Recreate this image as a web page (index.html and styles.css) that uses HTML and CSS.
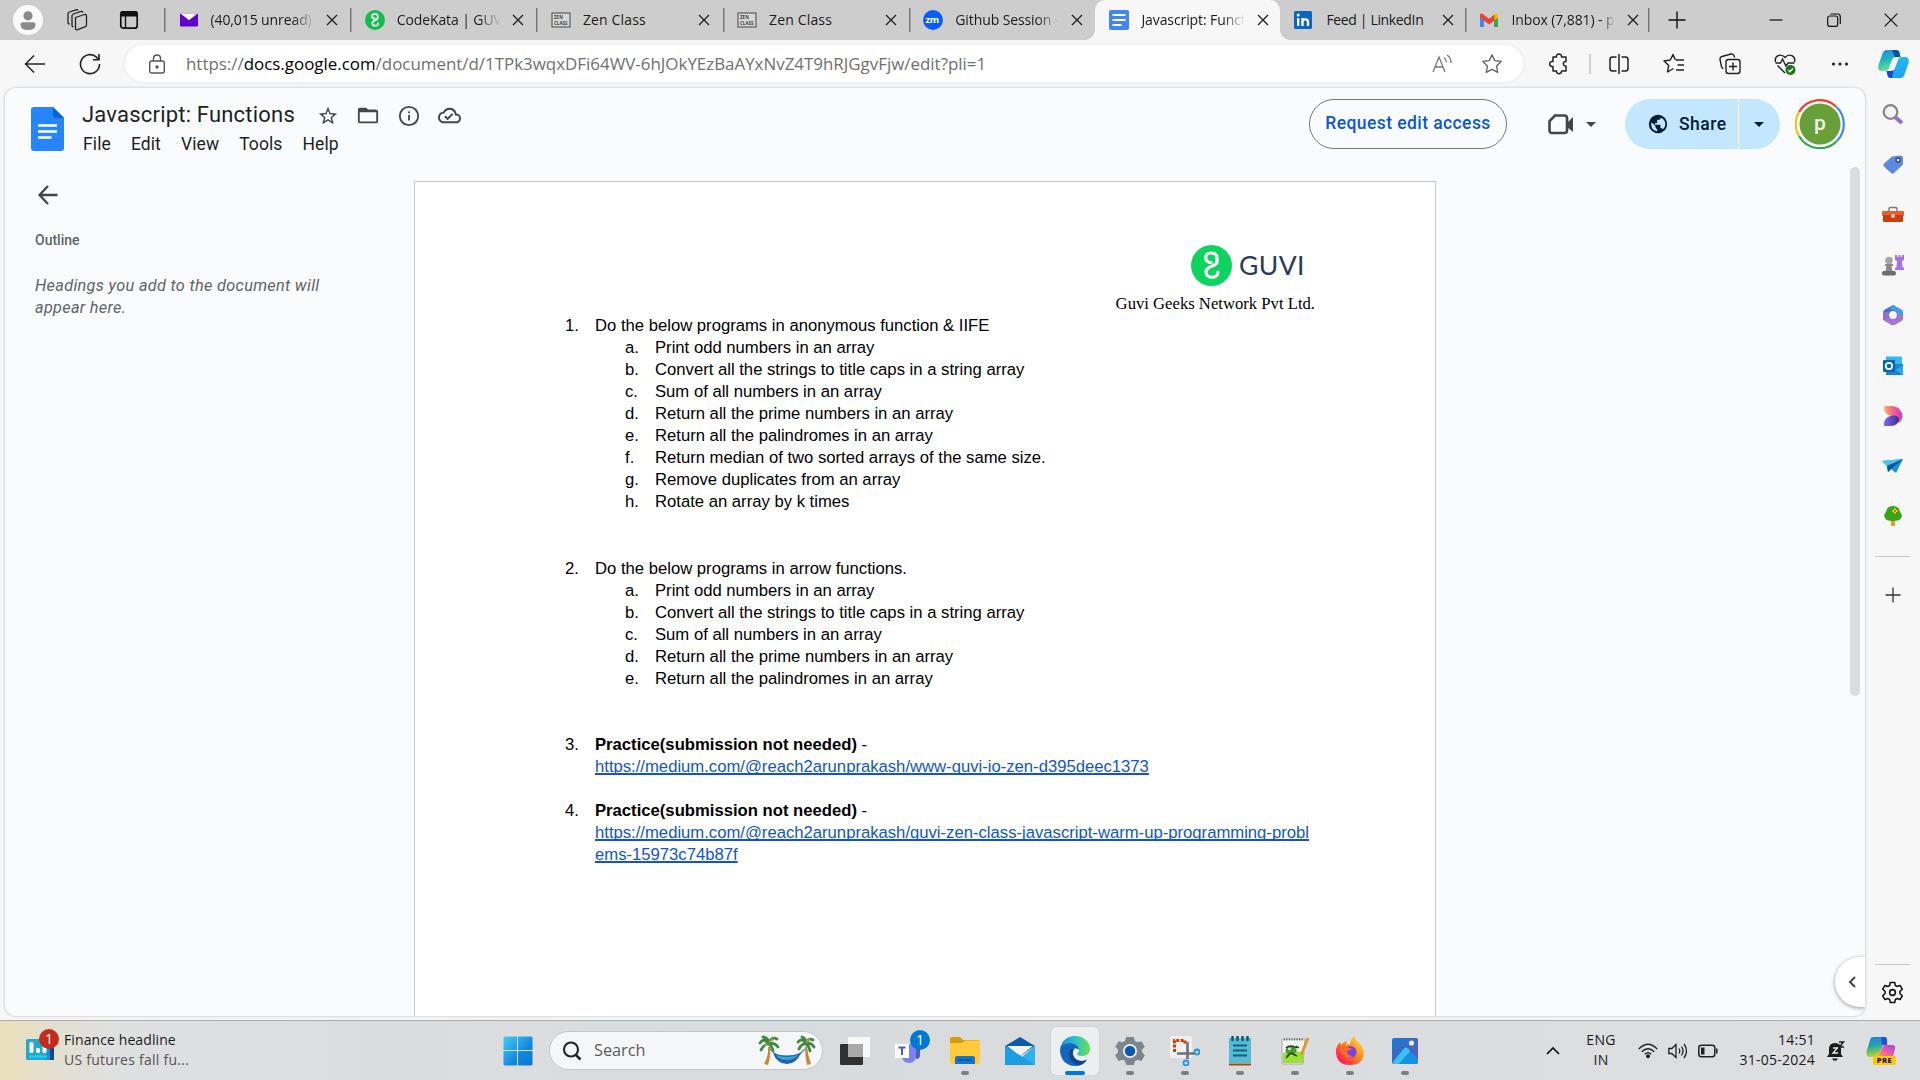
FILE: index.html
```html
<!DOCTYPE html>
<html lang="en">
<head>
<meta charset="utf-8">
<title>Javascript: Functions</title>
<link rel="stylesheet" href="styles.css">
</head>
<body>
<div class="screen">
  <header class="tabstrip">
    <div class="strip-tools">
      <span class="profile"><svg width="30" height="30" viewBox="0 0 30 30"><circle cx="15" cy="15" r="15" fill="#fafafa"/><circle cx="15" cy="10.8" r="4.6" fill="#8a8a8a"/><path d="M7.5 19.5q0-2.2 2.2-2.2h10.6q2.2 0 2.2 2.2 0 5.5-7.5 5.500-7.500 0-7.500-5.500z" fill="#8a8a8a"/></svg></span>
      <span class="tool"><svg width="24" height="24" viewBox="0 0 24 24" fill="none" stroke="#222" stroke-width="1.3"><path d="M10.500 9.500l9-3q2-.500 2 1.500v9q0 1.300-1.200 1.700l-7.500 3q-2.300.800-2.300-1.500z"/><path d="M8.500 18.500q-1.500.500-1.500-1.300V8q0-1.500 1.400-2l7.600-2.500q1.500-.300 2 1"/><path d="M4.800 15.800q-1.800.500-1.800-1.300V6q0-1.500 1.400-2L11 1.800q1.500-.400 2 .700"/></svg></span>
      <span class="tool"><svg width="20" height="20" viewBox="0 0 20 20"><rect x="1.800" y="1.800" width="16.400" height="16.400" rx="2.500" fill="none" stroke="#111" stroke-width="1.700"/><path d="M1 6.500V4q0-3 3-3h12q3 0 3 3v2.500z" fill="#111"/><path d="M6.500 6v12" stroke="#111" stroke-width="1.400"/></svg></span>
    </div>
    <nav class="tabs">
      <div class="tab"><svg class="fav" viewBox="0 0 20 20"><rect x="1" y="3.500" width="18" height="13" rx="1" fill="#6001d2"/><path d="M1.500 3.500h17L10 10.200z" fill="#fff"/></svg><span class="tab-title fade">(40,015 unread) -</span><svg class="x" viewBox="0 0 12 12"><path d="M1 1l10 10M11 1L1 11"/></svg></div>
      <div class="tab"><svg class="fav" viewBox="0 0 41 41"><circle cx="20.500" cy="20.500" r="20.500" fill="#0fbf4c"/><path d="M20 17.500c-7 0-7-9.500 0-9.500 4 0 6 2 6 5v4c0 5-11 3-11 10 0 7 12 7 12 0" fill="none" stroke="#fff" stroke-width="3.600" stroke-linecap="round"/></svg><span class="tab-title fade">CodeKata | GUVI</span><svg class="x" viewBox="0 0 12 12"><path d="M1 1l10 10M11 1L1 11"/></svg></div>
      <div class="tab"><svg class="fav" viewBox="0 0 20 20"><rect x="1" y="3" width="18" height="14" fill="#d7d7d7" stroke="#666" stroke-width="1.300"/><text x="3" y="9" class="zen">ZEN</text><text x="3" y="14.500" class="zen">CLASS</text></svg><span class="tab-title wide">Zen Class</span><svg class="x" viewBox="0 0 12 12"><path d="M1 1l10 10M11 1L1 11"/></svg></div>
      <div class="tab"><svg class="fav" viewBox="0 0 20 20"><rect x="1" y="3" width="18" height="14" fill="#d7d7d7" stroke="#666" stroke-width="1.300"/><text x="3" y="9" class="zen">ZEN</text><text x="3" y="14.500" class="zen">CLASS</text></svg><span class="tab-title wide">Zen Class</span><svg class="x" viewBox="0 0 12 12"><path d="M1 1l10 10M11 1L1 11"/></svg></div>
      <div class="tab"><svg class="fav" viewBox="0 0 20 20"><circle cx="10" cy="10" r="10" fill="#0b5cff"/><text x="2.500" y="13" class="zm">zm</text></svg><span class="tab-title fade">Github Session -</span><svg class="x" viewBox="0 0 12 12"><path d="M1 1l10 10M11 1L1 11"/></svg></div>
      <div class="tab active"><svg class="fav" viewBox="0 0 20 20"><rect width="20" height="20" rx="2" fill="#4285f4"/><path d="M3.500 5h13M3.500 10h13M3.500 15h9" stroke="#fff" stroke-width="2.200"/></svg><span class="tab-title fade">Javascript: Functions</span><svg class="x" viewBox="0 0 12 12"><path d="M1 1l10 10M11 1L1 11"/></svg></div>
      <div class="tab"><svg class="fav" viewBox="0 0 20 20"><rect x="0" y="1" width="18" height="18" rx="1.500" fill="#0a66c2"/><path d="M4.200 8v8M8.500 8v8M8.500 12c0-3.500 5.500-3.500 5.500 0v4" fill="none" stroke="#fff" stroke-width="2.300"/><circle cx="4.200" cy="5" r="1.500" fill="#fff"/></svg><span class="tab-title snug">Feed | LinkedIn</span><svg class="x" viewBox="0 0 12 12"><path d="M1 1l10 10M11 1L1 11"/></svg></div>
      <div class="tab"><svg class="fav" viewBox="0 0 20 20"><path d="M1 5v12h4V8z" fill="#4285f4"/><path d="M15 8v9h4V5z" fill="#34a853"/><path d="M15 4.500l2-1.200q2 0 2 2.200v2l-4 3z" fill="#fbbc04"/><path d="M1 7.500V5q0-2 2-1.500l7 5.200 5.500-4.200v6L10 14.500z" fill="#ea4335"/></svg><span class="tab-title fade late">Inbox (7,881) - p</span><svg class="x" viewBox="0 0 12 12"><path d="M1 1l10 10M11 1L1 11"/></svg></div>
    </nav>
    <span class="new-tab"><svg width="18" height="18" viewBox="0 0 18 18"><path d="M9 .500v17M.500 9h17" stroke="#111" stroke-width="1.400"/></svg></span>
    <div class="window-buttons">
      <span><svg width="14" height="14" viewBox="0 0 14 14"><path d="M.500 7h13" stroke="#111" stroke-width="1.200"/></svg></span>
      <span><svg width="14" height="14" viewBox="0 0 14 14" fill="none" stroke="#111" stroke-width="1.200"><rect x=".700" y="3" width="10" height="10.300" rx="2"/><path d="M3.500 1h7q2.800 0 2.800 2.800V11"/></svg></span>
      <span><svg width="14" height="14" viewBox="0 0 14 14"><path d="M.700.700l12.600 12.600M13.300.700L.700 13.300" stroke="#111" stroke-width="1.200"/></svg></span>
    </div>
  </header>

  <div class="toolbar">
    <span class="tb back"><svg width="22" height="20" viewBox="0 0 22 20" fill="none" stroke="#222" stroke-width="1.500"><path d="M21 10H1.500M10 1.500L1.500 10l8.500 8.500"/></svg></span>
    <span class="tb reload"><svg width="22" height="22" viewBox="0 0 22 22" fill="none" stroke="#222" stroke-width="1.600"><path d="M20.500 11A9.500 9.500 0 1 1 17.500 4.200l2.200 2.300M20 1v5.700h-6"/></svg></span>
    <div class="omnibox">
      <svg class="lock" width="18" height="20" viewBox="0 0 18 20" fill="none" stroke="#555" stroke-width="1.400"><rect x="1.700" y="7" width="14.600" height="12" rx="2"/><path d="M5.500 7V4.500q0-3.500 3.500-3.500t3.500 3.500V7"/><circle cx="9" cy="13" r="1" fill="#555"/></svg>
      <span class="url">https://<b>docs.google.com</b>/document/d/1TPk3wqxDFi64WV-6hJOkYEzBaAYxNvZ4T9hRJGgvFjw/edit?pli=1</span>
      <span class="omni-icon"><svg width="20" height="20" viewBox="0 0 20 20" fill="none" stroke="#777" stroke-width="1.300"><path d="M1 18L7 3l6 15M3.200 13h7.600M12 3.500q2.500 2 2.500 5M15.200 1q4 3 3.800 8"/></svg></span>
      <span class="omni-icon"><svg width="22" height="22" viewBox="0 0 24 24" fill="none" stroke="#666" stroke-width="1.500" stroke-linejoin="round"><path d="M12 2l3.100 6.300 6.900 1-5 4.900 1.200 6.900L12 17.800l-6.200 3.300L7 14.200 2 9.300l6.900-1z"/></svg></span>
    </div>
    <div class="actions">
      <span><svg width="22" height="22" viewBox="0 0 22 22" fill="none" stroke="#222" stroke-width="1.500" stroke-linejoin="round"><path d="M5 4h3.500c-.800-4 5.800-4 5 0H18v4.500c-3.500-.500-3.500 5 0 4.500V18h-4.500c.500 3.500-5.500 3.500-5 0H5v-4.500c-4.500.800-4.500-6 0-5z"/></svg></span>
      <i class="bar"></i>
      <span><svg width="20" height="20" viewBox="0 0 20 20" fill="none" stroke="#222" stroke-width="1.500"><path d="M7.500 3H3.500q-2.500 0-2.500 2.500v9Q1 17 3.500 17h4M12.500 3h4q2.500 0 2.500 2.500v9q0 2.500-2.500 2.500h-4M10 0v20"/></svg></span>
      <span><svg width="22" height="22" viewBox="0 0 22 22" fill="none" stroke="#222" stroke-width="1.400" stroke-linejoin="round"><path d="M13 7h8M14.500 12H21M13 17h8M10.500 15.500L4.500 19l1.200-6.500L1 8l6.300-1L10 1.500 12.500 7"/></svg></span>
      <span><svg width="22" height="22" viewBox="0 0 22 22" fill="none" stroke="#222" stroke-width="1.400"><rect x="7" y="6.500" width="14" height="14" rx="2.500"/><path d="M14 9.500v8M10 13.500h8M4.500 15.500q-1.500-.300-2-1.800L1 6.500Q.700 4 3 3.500L12 1q2-.300 3 1.500l.600 2"/></svg></span>
      <span><svg width="22" height="22" viewBox="0 0 22 22" fill="none" stroke="#222" stroke-width="1.400"><path d="M1.500 9C0 2.500 7 0 11 4.500 15 0 22 2.500 20.500 9M1.500 10h5l2-4 3.500 7 2-3h6.500M3.500 12.500L11 20"/><circle cx="16.500" cy="17" r="5" fill="#107c10" stroke="none"/><path d="M14.200 17l1.700 1.700 3-3.200" stroke="#fff"/></svg></span>
      <span><svg width="18" height="4" viewBox="0 0 18 4" fill="#222"><circle cx="2.500" cy="2" r="1.600"/><circle cx="9" cy="2" r="1.600"/><circle cx="15.500" cy="2" r="1.600"/></svg></span>
    </div>
    <span class="copilot"><svg width="31" height="28" viewBox="0 0 31 28"><defs><linearGradient id="cpa" x2=".3" y2="1"><stop stop-color="#1a8be0"/><stop offset=".5" stop-color="#1fb4c4"/><stop offset="1" stop-color="#6fe08c"/></linearGradient><linearGradient id="cpb" x2="0" y2="1"><stop stop-color="#2bb6ee"/><stop offset="1" stop-color="#1aa2f5"/></linearGradient></defs><path d="M9 0h9q3 0 3.500 3l1 4H18q-3 0-4 3l-3 8q-1 3-4 3H4q-5 0-3.500-6L4.500 3.500Q5.500 0 9 0z" fill="url(#cpa)"/><path d="M14 0h4q3 0 3.500 3l1 4h-6z" fill="#0c4fb0"/><path d="M22 28h-9q-3 0-3.500-3l-1-4H13q3 0 4-3l3-8q1-3 4-3h3q5 0 3.500 6l-4 11.500Q25.500 28 22 28z" fill="url(#cpb)"/><path d="M8.500 21H13q1.500 0 2.500-1l-1.500 8h-1q-3 0-3.500-3z" fill="#1747cc"/></svg></span>
  </div>

  <div class="body">
    <main class="page-frame">
      <div class="docs-bar">
        <svg class="docs-logo" width="33" height="44" viewBox="0 0 33 44"><path d="M3 0h19l11 11v30q0 3-3 3H3q-3 0-3-3V3q0-3 3-3z" fill="#2684fc"/><path d="M22 0l11 11H24q-2 0-2-2z" fill="#0066da"/><path d="M7 18.500h19M7 24.500h19M7 30.500h13.500" stroke="#fff" stroke-width="2.600"/></svg>
        <div class="doc-head">
          <div class="title-row">
            <h1>Javascript: Functions</h1>
            <span><svg width="22" height="22" viewBox="0 0 24 24" fill="#444746"><path d="M22 9.240l-7.190-.620L12 2 9.190 8.630 2 9.240l5.460 4.730L5.820 21 12 17.270 18.180 21l-1.630-7.030L22 9.240zM12 15.400l-3.760 2.270 1-4.280-3.320-2.880 4.380-.380L12 6.100l1.710 4.040 4.380.380-3.320 2.880 1 4.280L12 15.400z"/></svg></span>
            <span><svg width="22" height="22" viewBox="0 0 24 24" fill="#444746"><path d="M20 5h-8l-2-2H3q-2 0-2 2v13q0 2 2 2h18q2 0 2-2V7q0-2-3-2zm1 13H3V8h18z"/></svg></span>
            <span><svg width="22" height="22" viewBox="0 0 24 24" fill="#444746"><path d="M11 7h2v2h-2zm0 4h2v6h-2zm1-10a11 11 0 1 0 0 22 11 11 0 0 0 0-22zm0 20a9 9 0 1 1 0-18 9 9 0 0 1 0 18z"/></svg></span>
            <span><svg width="23" height="23" viewBox="0 0 24 24" fill="#444746"><path d="M19.350 10.040A7.490 7.490 0 0 0 12 4C9.110 4 6.600 5.640 5.350 8.040A5.994 5.994 0 0 0 0 14c0 3.310 2.690 6 6 6h13c2.760 0 5-2.240 5-5 0-2.640-2.050-4.780-4.650-4.960zM19 18H6c-2.210 0-4-1.790-4-4 0-2.050 1.530-3.760 3.560-3.970l1.070-.110.500-.950A5.469 5.469 0 0 1 12 6c2.620 0 4.880 1.860 5.390 4.430l.300 1.500 1.530.110A2.980 2.980 0 0 1 22 15c0 1.650-1.350 3-3 3zm-9-3.820l-2.090-2.090L6.500 13.500 10 17l6.010-6.010-1.410-1.410z"/></svg></span>
          </div>
          <div class="menu"><span>File</span><span>Edit</span><span>View</span><span>Tools</span><span>Help</span></div>
        </div>
        <button class="request">Request edit access</button>
        <div class="meet"><svg width="26" height="21" viewBox="0 0 26 21"><path d="M7 1.500h9.500q2.500 0 2.500 2.500v12.500q0 2.500-2.500 2.500H4q-2.500 0-2.500-2.500V7z" fill="none" stroke="#444746" stroke-width="2.600"/><path d="M19 9l6-6v15l-6-5z" fill="#444746"/></svg><svg width="10" height="5" viewBox="0 0 10 5"><path d="M0 0h10L5 5z" fill="#444746"/></svg></div>
        <div class="share"><span class="share-main"><svg width="20" height="20" viewBox="0 0 24 24" fill="#001d35"><path d="M12 1a11 11 0 1 0 0 22 11 11 0 0 0 0-22zm-1 19.930A8 8 0 0 1 4.300 10L9 14.700v1c0 1.100.900 2.200 2 2.200zm6.900-2.540c-.260-.810-1-1.390-1.900-1.390h-1v-3c0-.550-.450-1-1-1H8v-2h2c.550 0 1-.450 1-1V7h2c1.100 0 2-.900 2-2v-.400a8 8 0 0 1 2.900 13.790z"/></svg>Share</span><span class="share-more"><svg width="10" height="5" viewBox="0 0 10 5"><path d="M0 0h10L5 5z" fill="#001d35"/></svg></span></div>
        <svg class="avatar" width="50" height="50" viewBox="0 0 50 50"><g fill="none" stroke-width="2.200"><path d="M4 13A24 24 0 0 1 41 7.500" stroke="#ea4335"/><path d="M41 7.500A24 24 0 0 1 42 42" stroke="#4285f4"/><path d="M42 42A24 24 0 0 1 4 37" stroke="#34a853"/><path d="M4 37A24 24 0 0 1 4 13" stroke="#fbbc04"/></g><circle cx="25" cy="25" r="20.500" fill="#689f38"/><text x="25" y="30.500" text-anchor="middle" class="avatar-letter">p</text></svg>
      </div>

      <div class="workspace">
        <aside class="outline">
          <svg width="22" height="20" viewBox="0 0 22 20" fill="none" stroke="#444746" stroke-width="2.300"><path d="M20.500 10H2.500M11 1L2.500 10l8.500 9"/></svg>
          <h2>Outline</h2>
          <p>Headings you add to the document will appear here.</p>
        </aside>
        <article class="sheet">
          <div class="letterhead">
            <div class="brand"><svg width="41" height="41" viewBox="0 0 41 41"><circle cx="20.500" cy="20.500" r="20.500" fill="#0bd45f"/><path d="M20 17.500c-7 0-7-9.500 0-9.500 4 0 6 2 6 5v4c0 5-11 3-11 10 0 7 12 7 12 0" fill="none" stroke="#fff" stroke-width="3.200" stroke-linecap="round"/></svg><span>GUVI</span></div>
            <p>Guvi Geeks Network Pvt Ltd.</p>
          </div>
          <div class="doc-text">
            <div class="item"><span>1.</span><p>Do the below programs in anonymous function &amp; IIFE</p></div>
            <div class="item sub"><span>a.</span><p>Print odd numbers in an array</p></div>
            <div class="item sub"><span>b.</span><p>Convert all the strings to title caps in a string array</p></div>
            <div class="item sub"><span>c.</span><p>Sum of all numbers in an array</p></div>
            <div class="item sub"><span>d.</span><p>Return all the prime numbers in an array</p></div>
            <div class="item sub"><span>e.</span><p>Return all the palindromes in an array</p></div>
            <div class="item sub"><span>f.</span><p>Return median of two sorted arrays of the same size.</p></div>
            <div class="item sub"><span>g.</span><p>Remove duplicates from an array</p></div>
            <div class="item sub"><span>h.</span><p>Rotate an array by k times</p></div>
            <div class="item second"><span>2.</span><p>Do the below programs in arrow functions.</p></div>
            <div class="item sub"><span>a.</span><p>Print odd numbers in an array</p></div>
            <div class="item sub"><span>b.</span><p>Convert all the strings to title caps in a string array</p></div>
            <div class="item sub"><span>c.</span><p>Sum of all numbers in an array</p></div>
            <div class="item sub"><span>d.</span><p>Return all the prime numbers in an array</p></div>
            <div class="item sub"><span>e.</span><p>Return all the palindromes in an array</p></div>
            <div class="item spaced"><span>3.</span><p><b>Practice(submission not needed)</b> -<br><a>https://medium.com/@reach2arunprakash/www-guvi-io-zen-d395deec1373</a></p></div>
            <div class="item spaced-one"><span>4.</span><p><b>Practice(submission not needed)</b> -<br><a>https://medium.com/@reach2arunprakash/guvi-zen-class-javascript-warm-up-programming-probl<br>ems-15973c74b87f</a></p></div>
          </div>
        </article>
        <i class="scroll-thumb"></i>
      </div>
      <span class="panel-toggle"><svg width="8" height="12" viewBox="0 0 8 12"><path d="M7 1L2 6l5 5" fill="none" stroke="#444746" stroke-width="2"/></svg></span>
    </main>

    <aside class="sidebar">
      <span><svg width="22" height="22" viewBox="0 0 22 22"><path d="M13 13l7 6" stroke="#9b6ad8" stroke-width="4"/><circle cx="8.500" cy="8" r="6.800" fill="#f2f2f2" stroke="#858585" stroke-width="2.200"/></svg></span>
      <span><svg width="22" height="22" viewBox="0 0 22 22"><path d="M10 2.500l8-1q3 0 3 3v6L12 19q-1.500 1.500-3 0L2 12.500q-1.500-1.500 0-3z" fill="#5c8ae0"/><circle cx="16" cy="6" r="2" fill="#fff" stroke="#24498f" stroke-width="1.300"/></svg></span>
      <span><svg width="22" height="22" viewBox="0 0 22 22"><path d="M7 7V5q0-1.500 1.500-1.500h5Q15 3.500 15 5v2" fill="none" stroke="#777" stroke-width="1.400"/><rect x="0" y="7" width="22" height="5" rx="1" fill="#e8602c"/><path d="M1 11h20v6q0 1-1 1H2q-1 0-1-1z" fill="#c8400f"/><circle cx="11" cy="12" r="2" fill="#ccc"/></svg></span>
      <span><svg width="22" height="22" viewBox="0 0 22 22"><path d="M13 1h2v2h1.500V1h2v2H20V1h2v5l-2 1 .500 6 1.500 1v2h-9v-2l1.500-1 .500-6-2-1z" fill="#a873dd"/><circle cx="7" cy="6.500" r="3.800" fill="#a6a6a6"/><path d="M3 10h8v2H9.500l1 5.500h-7l1-5.500H3z" fill="#8a8a8a"/><rect y="17" width="14" height="4.500" rx="2" fill="#6e6e6e"/></svg></span>
      <span><svg width="22" height="22" viewBox="0 0 22 22"><path d="M11 1l8 4.500q2 1 2 3V14q0 2-2 3l-6 3.500q-2 1-4 0L3 17q-2-1-2-3V8.500q0-2 2-3z" fill="#4f6fcb"/><path d="M11 1l8 4.500q2 1 2 3V13l-6-3V7.500L8 5z" fill="#3aa3e8"/><path d="M1 8l6 0v6l-5 2.500Q1 15.500 1 14z" fill="#8f6fd0"/><path d="M21 12v2q0 2-2 3l-6 3.500q-2 1-4 0L1.500 16l5-2.500 5 2 4-3V9z" fill="#a875d2"/><circle cx="11" cy="11" r="3.900" fill="#f7f7f7"/></svg></span>
      <span><svg width="22" height="22" viewBox="0 0 22 22"><rect x="4" y="1.500" width="16" height="12" fill="#35b8f1"/><rect x="4" y="9" width="17" height="11" fill="#1484d6"/><path d="M13 15l8-5v10z" fill="#28a8ea"/><rect x="1" y="5" width="12" height="12" rx="1" fill="#0364b8"/><circle cx="7" cy="11" r="3.200" fill="none" stroke="#fff" stroke-width="1.800"/></svg></span>
      <span><svg width="22" height="22" viewBox="0 0 22 22"><defs><linearGradient id="dsa"><stop stop-color="#ffb067"/><stop offset=".6" stop-color="#f0568d"/><stop offset="1" stop-color="#c436e8"/></linearGradient><linearGradient id="dsb"><stop stop-color="#7b6df5"/><stop offset="1" stop-color="#3f2b8c"/></linearGradient></defs><path d="M2 1h8q10 1 10.500 11-1 4-4 6 0-7-7-7Q2 10 2 1z" fill="url(#dsa)"/><path d="M2 21v-3q1-7 9-7.500 6 0 6 4Q16 21 9 21z" fill="url(#dsb)"/></svg></span>
      <span><svg width="22" height="22" viewBox="0 0 22 22"><path d="M0 6l21-2-7 14-5-4-3 3-1-6z" fill="#1793dc"/><path d="M0 6l21-2L5 11z" fill="#4cc2f5"/><path d="M5 11l16-7-12 10-3 3z" fill="#0b5590"/></svg></span>
      <span><svg width="22" height="22" viewBox="0 0 22 22"><path d="M9 15h4v6H9z" fill="#e9a118"/><path d="M11 1q6 0 7 6 3 3 1 6-1 3-8 3t-8-3q-2-3 1-6 1-6 7-6z" fill="#3aa418"/><path d="M13 3.500v5M10.500 6h5" stroke="#ffd21a" stroke-width="2.200"/><circle cx="13" cy="6" r="1" fill="#d33"/></svg></span>
      <i class="rule"></i>
      <span class="add"><svg width="16" height="16" viewBox="0 0 16 16"><path d="M8 .500v15M.500 8h15" stroke="#333" stroke-width="1.300"/></svg></span>
      <i class="rule low"></i>
      <span class="settings"><svg width="23" height="23" viewBox="0 0 24 24" fill="none" stroke="#111" stroke-width="1.600" stroke-linejoin="round"><path d="M9.700 1.500h4.600l.700 3.200 1.700 1 3.200-1.100 2.300 4-2.500 2.300v2.200l2.500 2.300-2.300 4-3.200-1.100-1.700 1-.700 3.200H9.700L9 19.300l-1.700-1-3.200 1.100-2.300-4 2.500-2.300v-2.200L1.800 8.600l2.300-4 3.200 1.100 1.700-1z"/><circle cx="12" cy="12" r="3"/></svg></span>
    </aside>
  </div>

  <footer class="taskbar">
    <div class="widget">
      <div class="widget-icon"><svg width="28" height="21" viewBox="0 0 28 21"><rect width="28" height="21" rx="2.500" fill="#1f8fce"/><rect width="20" height="21" rx="2.500" fill="#28a6cf"/><rect x="24" y="4" width="4" height="17" fill="#0b4a8a"/><rect x="3.500" y="3" width="4" height="11" rx="1.500" fill="#fff"/><rect x="10" y="9" width="4" height="5" rx="1.500" fill="#fff"/><rect x="16.500" y="7" width="4" height="7" rx="1.500" fill="#fff"/><path d="M3 17.500h18" stroke="#18d6f5" stroke-width="2"/></svg><b class="badge red">1</b></div>
      <div class="widget-text"><span>Finance headline</span><small>US futures fall fu...</small></div>
    </div>
    <span class="slot start"><svg width="30" height="30" viewBox="0 0 30 30"><defs><linearGradient id="win" x2="1" y2="1"><stop stop-color="#45cdfb"/><stop offset=".6" stop-color="#1189e0"/><stop offset="1" stop-color="#0b74d1"/></linearGradient></defs><path d="M1.500.500H14V14H.500V1.500zM15 .500h13.500l1 1V14H15zM.500 15H14v14.500H1.500l-1-1zM15 15h14.500v13.500l-1 1H15z" fill="url(#win)"/></svg></span>
    <div class="search">
      <svg width="20" height="20" viewBox="0 0 20 20" fill="none" stroke="#222"><circle cx="9" cy="8.500" r="7" stroke-width="2.100"/><path d="M13.800 13.800L18.500 18.500" stroke-width="2.600"/></svg>
      <span>Search</span>
      <svg width="58" height="32" viewBox="0 0 58 32"><path d="M10 12q1 8-4 17l4 1q3-9 2-18zM49 12q1 9 4 17l-4 1q-2-9-2-18z" fill="#c9882f"/><g fill="none" stroke="#3f8a43" stroke-width="2.800" stroke-linecap="round"><path d="M11 9Q6 2 2 8M11 9Q7 8 3 15M11 9Q11 3 5 2M11 9Q13 1 19 4M11 9q5-2 9 3M11 9q3 2 4 7M48 9q-4-7-8-2M48 9q-4-1-7 5M48 9q0-6-4-7M48 9q2-7 7-4M48 9q5-2 8 3M48 9q3 2 4 7"/></g><path d="M11 7l5-3M48 7l4-3M9 9l-3 1" stroke="#b8a13d" stroke-width="1.600"/><path d="M12 14l6 6M47 14l-6 6M12 14q6 8 17 8t18-8" fill="none" stroke="#5a8ccc" stroke-width="1.200"/><path d="M15 18q14 5 28 0-5 11-14 11-10 0-14-11z" fill="#2363b5"/><path d="M18 20q11 4 22 0-4 5-11 5-8 0-11-5z" fill="#39a5cf"/></svg>
    </div>
    <div class="apps">
      <span class="slot"><svg width="30" height="28" viewBox="0 0 30 28"><rect y="7" width="23" height="21" rx="1" fill="#30302f"/><rect x="8" width="22" height="20" rx="1" fill="#fff" opacity=".8"/><path d="M8 7h15v13H8z" fill="#aaa"/></svg></span>
      <span class="slot teams"><svg width="34" height="30" viewBox="0 0 34 30"><path d="M19 7h8v12q0 4-4 4z" fill="#5059c9"/><path d="M10 8h13v11q0 8-7 8t-7-8z" fill="#7b83eb"/><rect x="2" y="8" width="14" height="14" fill="#fff"/><path d="M5.500 11.500h7M9 11.500V19" stroke="#5059c9" stroke-width="2"/></svg><b class="badge blue">1</b></span>
      <span class="slot run"><svg width="30" height="27" viewBox="0 0 30 27"><path d="M0 2q0-2 2-2h8l3 3h15q2 0 2 2v5H0z" fill="#d99a0b"/><path d="M0 6h12l3-2.500h15V25q0 2-2 2H2q-2 0-2-2z" fill="#ffcb3d"/><path d="M5 27v-6q0-2 2-2h16q2 0 2 2v6z" fill="#0f78cc"/><path d="M8 23h14" stroke="#073f77"/></svg></span>
      <span class="slot"><svg width="30" height="28" viewBox="0 0 30 28"><path d="M0 9L15 0l15 9-15 10z" fill="#0b5cab"/><path d="M2 9h26L15 19z" fill="#f2f2f2"/><path d="M0 9l17 11 13-11v19H0z" fill="#2bb3ef"/><path d="M0 9v19h30z" fill="#1a9de2"/></svg></span>
      <span class="slot current"><svg width="30" height="30" viewBox="0 0 30 30"><defs><linearGradient id="eda" x2="1"><stop stop-color="#1b8fdc"/><stop offset=".5" stop-color="#2cc0d0"/><stop offset="1" stop-color="#6be34d"/></linearGradient></defs><path d="M0 14C1 5 7 0 15 0c9 0 15 6 15 13 0 5-4 7-8 7-3 0-5-1-5-2s2-1 2-4c0-4-4-7-9-7-6 0-9 4-10 7z" fill="url(#eda)"/><path d="M0 14c1-5 5-7 10-7 5 0 9 3 9 7-2-2-5-2-6 0-3 5 1 11 8 11 3 0 5-1 6-2-3 5-7 7-12 7C6 30 0 23 0 14z" fill="#1267bd"/><path d="M11 13c-4 4-2 14 8 16.500 4-1 7-4 8-6-1 1-3 1.500-5 1.500-7 0-11-6-8-12z" fill="#0d4690"/></svg></span>
      <span class="slot run"><svg width="30" height="30" viewBox="0 0 24 24"><path d="M9 .800h6l1 3.200 2 1 3.200-.900 2.600 4.500-2.200 2.400v2l2.200 2.400-2.600 4.500L18 19l-2 1-1 3.200H9L8 20l-2-1-3.200.900L.200 15.400 2.400 13v-2L.200 8.600l2.600-4.500L6 5l2-1z" fill="#7e868d"/><circle cx="12" cy="12" r="5.600" fill="#f2f2f2"/><circle cx="12" cy="12" r="4.200" fill="#0c59b0"/></svg></span>
      <span class="slot run"><svg width="30" height="30" viewBox="0 0 30 30"><rect width="22" height="22" rx="2" fill="#f0f0f0"/><path d="M4.500 16V4.500H15V8" fill="none" stroke="#d13c0b" stroke-width="3" stroke-dasharray="3 1.400"/><path d="M17.500 6v17M7 17.500h17" stroke="#6e7276" stroke-width="2.600"/><g fill="none" stroke="#1c97e8" stroke-width="1.800"><circle cx="27" cy="16" r="2.500"/><circle cx="16" cy="27" r="2.500"/></g></svg></span>
      <span class="slot run"><svg width="22" height="30" viewBox="0 0 22 30"><path d="M0 2h22v25H0z" fill="#56bcd6"/><path d="M3.500 0v4M8.500 0v4M13.500 0v4M18.500 0v4" stroke="#11566d" stroke-width="2.500" stroke-linecap="round"/><path d="M4 9.500h14M4 14.500h14M4 19.500h14" stroke="#115e78" stroke-width="1.800"/><path d="M0 28.500h22" stroke="#a04a13" stroke-width="2"/></svg></span>
      <span class="slot run"><svg width="30" height="30" viewBox="0 0 30 30"><path d="M2 3h23l-2 25H2z" fill="#f4f4ee" stroke="#aaa"/><path d="M3 17q10-4 21 0l-1 10H3z" fill="#9be035"/><ellipse cx="11" cy="14.500" rx="5.500" ry="4" fill="#4c9a35"/><path d="M6 12q4-4 11 0M7 20l4-3 6 3M6 22l3-3M16 10l3 2" fill="none" stroke="#1f3d1a" stroke-width="1.400"/><circle cx="9.500" cy="13" r="1.300" fill="#fff"/><path d="M4 3.500h19" stroke="#555" stroke-dasharray="1 1.500" stroke-width="2"/><path d="M28 2l-7 17" stroke="#dc9b26" stroke-width="2.800"/></svg></span>
      <span class="slot run"><svg width="28" height="29" viewBox="0 0 28 29"><defs><linearGradient id="ffx" x1="1" x2="0" y2="1"><stop stop-color="#fff04a"/><stop offset=".45" stop-color="#ff8a16"/><stop offset=".8" stop-color="#fb2b50"/><stop offset="1" stop-color="#e31587"/></linearGradient></defs><path d="M18 0q1 4 4 6t6 9q0 14-14 14T0 15q0-5 4-9l1 3q4-4 6-4l-1 4q3-1 4-1 1-5 4-8z" fill="url(#ffx)"/><circle cx="14.500" cy="16" r="6" fill="#7542e5"/><path d="M4 11q5-3 9 1l4 1q-5 1-6 3 1 4 6 4-5 4-9 0-4-3-4-9z" fill="#ff6b25"/></svg></span>
      <span class="slot run"><svg width="26" height="26" viewBox="0 0 26 26"><defs><linearGradient id="pho" x2="1" y2="1"><stop stop-color="#1679d6"/><stop offset="1" stop-color="#6a55a8"/></linearGradient></defs><rect width="26" height="26" rx="2" fill="url(#pho)"/><path d="M1 24L12 10.500q2-2 4 0L26 21v3q0 2-2 2H2z" fill="#1391e2"/><path d="M1 24l11-13.500q2-2 4 0l2 2.500L7 26H2z" fill="#39c1f2"/><circle cx="19.500" cy="5" r="2.600" fill="#eee"/></svg></span>
    </div>
    <div class="tray">
      <span class="chev"><svg width="14" height="9" viewBox="0 0 14 9"><path d="M1 8l6-6 6 6" fill="none" stroke="#111" stroke-width="1.700"/></svg></span>
      <span class="lang">ENG<br>IN</span>
      <span class="sys"><svg width="20" height="16" viewBox="0 0 20 16" fill="none" stroke="#222" stroke-width="1.400"><path d="M.800 6q9.200-9.500 18.400 0M3.800 8.800q6.200-6 12.400 0M6.800 11.300q3.200-3 6.400 0"/><circle cx="10" cy="13.300" r="1.300" fill="#222"/></svg></span>
      <span class="sys"><svg width="20" height="16" viewBox="0 0 20 16" fill="none" stroke="#222" stroke-width="1.300"><path d="M.800 5.500h3L8 1.500v13l-4.200-4h-3zM11 5.500q1.500 2.500 0 5M13.500 3.500q3 4.500 0 9M16 1q5 7 0 14"/></svg></span>
      <span class="sys"><svg width="20" height="14" viewBox="0 0 20 14"><rect x=".800" y="1.300" width="16" height="11.400" rx="2.500" fill="none" stroke="#222" stroke-width="1.500"/><rect x="3" y="3.500" width="3.500" height="7" fill="#222"/><path d="M18 4.500h1.500v5H18z" fill="#222"/></svg></span>
      <span class="clock">14:51<br>31-05-2024</span>
      <span class="bell"><svg width="18" height="20" viewBox="0 0 18 20"><path d="M2 8q0-6 6-6 6 0 6 6v5l2 3H0l2-3z" fill="#1b1b1b"/><path d="M5 17.500h6q-1 2.300-3 2.300t-3-2.300z" fill="#1b1b1b"/><path d="M6 7h4.500L6 12h5" fill="none" stroke="#eee" stroke-width="1.300"/><path d="M12 1h4.500L12.500 6h4.500" fill="none" stroke="#1b1b1b" stroke-width="1.500"/></svg></span>
      <span class="pre"><svg width="30" height="28" viewBox="0 0 30 28"><defs><linearGradient id="pra" x2=".2" y2="1"><stop stop-color="#1c7fe6"/><stop offset=".5" stop-color="#25a7a0"/><stop offset="1" stop-color="#bcd52e"/></linearGradient><linearGradient id="prb" x1="1" x2="0" y2="1"><stop stop-color="#9a4bf0"/><stop offset=".5" stop-color="#ee57a6"/><stop offset="1" stop-color="#ff9d53"/></linearGradient></defs><path d="M7 0h12q3 0 2 8h-4l-5 12H3q-4-1-2-7L4 3q1-3 3-3z" fill="url(#pra)"/><path d="M15 0h4q2 0 2 8h-5z" fill="#2350d8"/><path d="M19 8h7q4 0 3 4l-2 8H12l4-9q1-3 3-3z" fill="url(#prb)"/><rect x="7" y="19" width="23" height="9" rx="2" fill="#ffc60a"/><text x="18.500" y="26.300" text-anchor="middle" class="pre-text">PRE</text></svg></span>
    </div>
  </footer>
</div>
</body>
</html>
```

FILE: styles.css
```css
* { box-sizing: border-box; }
body { margin: 0; background: #f7f7f7; }
h1, h2, p { margin: 0; font-weight: 400; }
svg { display: block; flex: none; }

.screen {
  display: flex;
  flex-direction: column;
  width: 1920px;
  height: 1080px;
  overflow: hidden;
  font-family: "Open Sans", "Noto Sans", sans-serif;
  color: #1b1b1b;
}

/* Tab strip */
.tabstrip { display: flex; height: 40px; background: #cdcdcd; }
.strip-tools { display: flex; align-items: center; width: 164px; padding-left: 13px; }
.profile { width: 30px; }
.tool { display: flex; justify-content: center; width: 52px; }
.profile + .tool { margin-left: 8px; }
.tabs { display: flex; flex: none; width: 1486px; }
.tab {
  position: relative;
  display: flex;
  flex: none;
  align-items: center;
  width: 186.200px;
  padding-left: 14.500px;
  background: linear-gradient(#777, #777) 0 8px / 1.500px 24px no-repeat;
}
.tab:nth-child(n+6) { width: 185px; }
.tab:last-child { background: linear-gradient(#777, #777) 0 8px / 1.500px 24px no-repeat, linear-gradient(#777, #777) 100% 8px / 1.500px 24px no-repeat; }
.tab.active { background: #f7f7f7; border-radius: 10px 10px 0 0; }
.tab.active + .tab { background: none; }
.tab.active::before, .tab.active::after {
  content: "";
  position: absolute;
  bottom: 0;
  width: 10px;
  height: 10px;
}
.tab.active::before { left: -10px; background: radial-gradient(circle at 0 0, transparent 9.500px, #f7f7f7 10px); }
.tab.active::after { right: -10px; background: radial-gradient(circle at 100% 0, transparent 9.500px, #f7f7f7 10px); }
.fav { width: 20px; height: 20px; }
.tab-title {
  width: 105px;
  margin: -2px 0 0 12px;
  white-space: nowrap;
  font-size: 14px;
  letter-spacing: -.1px;
}
.tab-title.wide { letter-spacing: .15px; }
.tab-title.snug { letter-spacing: -.35px; }
.tab-title.fade { overflow: hidden; mask-image: linear-gradient(90deg, #000 78%, transparent 99%); }
.tab-title.late { mask-image: linear-gradient(90deg, #000 86%, transparent 99%); }
.x { width: 12px; height: 12px; margin-left: 10.500px; stroke: #222; stroke-width: 1.400; }
.zen { font: 700 4.500px "Open Sans", sans-serif; fill: #444; }
.zm { font: 700 9.500px "Open Sans", sans-serif; fill: #fff; letter-spacing: -.5px; }
.new-tab { display: flex; align-items: center; width: 54px; padding-left: 18px; }
.window-buttons { display: flex; align-items: center; margin-left: auto; }
.window-buttons span { display: flex; justify-content: center; width: 57.500px; }

/* Toolbar */
.toolbar { display: flex; align-items: center; height: 48px; padding-bottom: 1px; background: #f7f7f7; }
.tb { display: flex; justify-content: center; }
.back { width: 70px; }
.reload { width: 40px; }
.omnibox {
  display: flex;
  align-items: center;
  width: 1398px;
  height: 37px;
  margin-left: 15px;
  padding-left: 23px;
  background: #fff;
  border-radius: 19px;
  box-shadow: 0 0 4px rgba(0, 0, 0, .08);
}
.url {
  flex: 1;
  margin-left: 20px;
  white-space: nowrap;
  font-size: 16.920px;
  color: #707070;
}
.url b { font-weight: 400; color: #000; }
.omni-icon { display: flex; justify-content: center; width: 50px; }
.omni-icon:last-child { margin-right: 6px; }
.actions { display: flex; align-items: center; margin-left: 8px; }
.actions span { display: flex; justify-content: center; width: 55.300px; }
.bar { width: 2px; height: 20px; margin: 0 0 0 3px; background: #d2d2d2; }
.copilot { margin-left: auto; margin-right: 11px; }

/* Page */
.body { display: flex; height: 932px; padding-left: 5px; }
.page-frame {
  position: relative;
  display: flex;
  flex-direction: column;
  width: 1860px;
  height: 928px;
  overflow: hidden;
  background: #f9fbfd;
  border-radius: 11px;
  box-shadow: 0 0 3px rgba(0, 0, 0, .25);
}
.docs-bar {
  display: flex;
  flex: none;
  height: 73px;
  padding: 11px 20px 0 26px;
  font-family: Roboto, sans-serif;
}
.docs-logo { margin-top: 8px; }
.doc-head { width: 640px; margin-left: 18px; }
.title-row { display: flex; align-items: center; height: 33px; }
.title-row h1 { width: 226px; margin-top: -2px; font-size: 22px; letter-spacing: .2px; color: #1f1f1f; white-space: nowrap; }
.title-row span { display: flex; justify-content: center; width: 40.300px; }
.menu { display: flex; gap: 20px; padding-left: 1px; font-size: 17.500px; letter-spacing: .1px; line-height: 25px; color: #1f1f1f; }
.request {
  width: 198px;
  height: 50px;
  margin-left: 587px;
  padding: 0 0 2px;
  border: 1px solid #747775;
  border-radius: 25px;
  background: transparent;
  font: 500 17.500px Roboto, sans-serif;
  letter-spacing: .42px;
  color: #0b57d0;
  white-space: nowrap;
}
.meet { display: flex; align-items: center; gap: 12px; height: 50px; margin-left: 41px; }
.share {
  display: flex;
  width: 155px;
  height: 50px;
  margin-left: auto;
  border-radius: 25px;
  background: #c2e7ff;
  font-size: 17.500px;
  font-weight: 500;
  letter-spacing: .5px;
  color: #001d35;
}
.share-main { display: flex; align-items: center; gap: 11px; width: 114px; padding-left: 23px; border-right: 1.500px solid #fff; }
.share-more { display: flex; align-items: center; padding-left: 15px; }
.avatar { margin-left: 15px; }
.avatar-letter { font: 500 21px Roboto, sans-serif; fill: #f1f5ec; }

.workspace { display: flex; flex: 1; min-height: 0; }
.outline { width: 409px; padding: 24px 80px 0 30px; font-family: Roboto, sans-serif; color: #5f6368; }
.outline svg { margin-left: 2px; }
.outline h2 { margin-top: 25px; font-size: 14px; font-weight: 500; line-height: 20px; }
.outline p { margin-top: 25px; font-size: 16.250px; font-style: italic; line-height: 22px; letter-spacing: .33px; }
.sheet {
  width: 1022px;
  margin-top: 20px;
  padding: 63px 120px 0;
  background: #fff;
  border: 1px solid #c7c7c7;
  border-bottom: 0;
}
.letterhead p { text-align: right; font: 16.670px/22px "Liberation Serif", serif; color: #000; margin-top: 7px; }
.brand { display: flex; align-items: center; justify-content: flex-end; gap: 7px; margin-right: 8px; }
.brand span { width: 68px; font: 26.500px/41px Lato, sans-serif; letter-spacing: .4px; color: #2c3a57; }
.doc-text { padding-left: 30px; font: 16.670px/22px "Liberation Sans", Arial, sans-serif; color: #000; }
.item { display: flex; }
.item > span { width: 30px; }
.item p { white-space: nowrap; }
.sub { padding-left: 60px; }
.second { margin-top: 45px; }
.spaced { margin-top: 44px; }
.spaced-one { margin-top: 22px; }
.item a { color: #1155cc; text-decoration: underline; text-decoration-skip-ink: none; text-decoration-thickness: 2px; }
.scroll-thumb { width: 10px; height: 529px; margin: 6px 0 0 414px; border-radius: 5px; background: #dadce0; }
.panel-toggle {
  position: absolute;
  right: 0;
  bottom: 9px;
  display: flex;
  align-items: center;
  width: 30px;
  height: 50px;
  padding-left: 13px;
  background: #fff;
  border-radius: 25px 0 0 25px;
  box-shadow: 0 1px 4px rgba(0, 0, 0, .4);
}

/* Edge sidebar */
.sidebar { display: flex; flex: 1; flex-direction: column; align-items: center; padding-top: 2px; }
.sidebar span { display: flex; flex: none; align-items: center; justify-content: center; height: 50.100px; }
.rule { flex: none; width: 35px; height: 1px; margin-top: 15px; background: #c8c8c8; }
.add { margin-top: 13px; }
.rule.low { margin-top: auto; }
.sidebar .settings { height: 47px; margin: 4px 0; }

/* Taskbar */
.taskbar {
  display: flex;
  align-items: center;
  height: 60px;
  border-top: 1px solid #aaacad;
  background: linear-gradient(90deg, #ebe0bc 0, #e4dfcf 50px, #dfe0e0 110px, #dcdfe2 300px, #d8dcde 400px, #dcddde 480px, #d8dcde 650px, #d9dbdd 1100px, #dcddde 1500px, #dedfe0 1920px);
}
.widget { display: flex; width: 490px; padding-left: 26px; }
.widget-icon { position: relative; width: 28px; padding-top: 7px; }
.badge {
  position: absolute;
  width: 20px;
  height: 20px;
  border-radius: 50%;
  text-align: center;
  font: 14px/20px "Open Sans", sans-serif;
  color: #fff;
}
.red { left: 13px; top: -3px; background: #c42b1c; }
.blue { left: 28px; top: 3px; background: #0078d4; }
.widget-text { display: flex; flex-direction: column; margin: -2px 0 0 10px; font-size: 14px; line-height: 20px; white-space: nowrap; letter-spacing: .1px; }
.widget-text small { font-size: 14px; letter-spacing: .25px; color: #555; }
.slot {
  position: relative;
  display: flex;
  flex: none;
  align-items: center;
  justify-content: center;
  width: 55px;
  height: 48px;
}
.run::after, .current::after {
  content: "";
  position: absolute;
  bottom: 0;
  width: 8px;
  height: 4px;
  border-radius: 2px;
  background: #7c7e80;
}
.current { width: 48px; margin: 0 3.500px; border-radius: 5px; background: #eceeef; box-shadow: 0 0 1px #aaa; }
.current::after { width: 20px; background: #0078d4; }
.search {
  display: flex;
  align-items: center;
  width: 274px;
  height: 39px;
  margin-left: 4px;
  padding: 0 6px 0 12px;
  border: 1px solid #c4c6c8;
  border-radius: 20px;
  background: #f4f6f7;
}
.search span { flex: 1; margin: -1px 0 0 12px; font-size: 16.300px; color: #5c5c5c; }
.apps { display: flex; margin-left: 4px; }
.tray { display: flex; align-items: center; margin-left: 106px; font-size: 14px; line-height: 20px; }
.chev { display: flex; justify-content: center; width: 30px; }
.lang { width: 52px; margin: -1px 6px 0 7px; text-align: center; letter-spacing: .3px; }
.sys { display: flex; justify-content: center; width: 30px; }
.clock { width: 92px; margin-top: -2px; text-align: right; white-space: nowrap; letter-spacing: .25px; }
.bell { margin-left: 12px; }
.pre { margin-left: 21px; }
.pre-text { font: 800 7.500px "Open Sans", sans-serif; letter-spacing: .5px; fill: #1b1b1b; }
```
